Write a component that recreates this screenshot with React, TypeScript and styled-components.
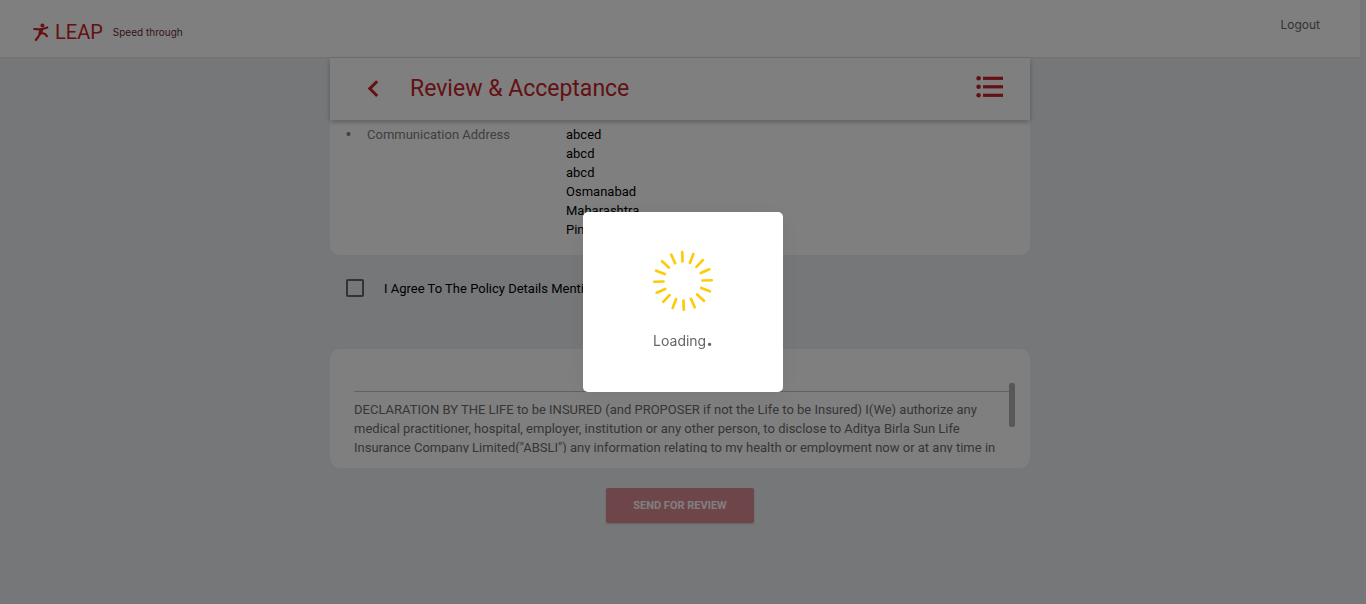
import React from "react";
import styled, { createGlobalStyle } from "styled-components";

const red = "#c7222a";

const GlobalStyle = createGlobalStyle`
  * { box-sizing: border-box; }
  body {
    margin: 0;
    background: #ebeff3;
    font-family: Roboto, "Liberation Sans", sans-serif;
    font-size: 13px;
    line-height: 19px;
    color: #000;
  }
`;

const Page = styled.div`
  min-height: 100vh;
  padding-right: 6px;
`;

const Header = styled.header`
  display: flex;
  justify-content: space-between;
  align-items: flex-start;
  height: 58px;
  padding: 15px 40px 0 33px;
  background: #fff;
  border-bottom: 1px solid #e2e2e2;
`;

const Brand = styled.div`
  display: flex;
  align-items: center;
  height: 34px;
`;

const BrandName = styled.span`
  margin: 0 10px 0 5px;
  font-size: 20px;
  color: ${red};
`;

const Tagline = styled.span`
  font-family: Inter, sans-serif;
  font-size: 10px;
  color: #6b2a30;
`;

const Logout = styled.a`
  font-family: Inter, sans-serif;
  font-size: 12px;
  color: #666;
  text-decoration: none;
`;

const Main = styled.main`
  display: flex;
  flex-direction: column;
  max-width: 700px;
  margin: 0 auto;
`;

const TitleBar = styled.div`
  display: flex;
  align-items: center;
  height: 62px;
  padding: 0 27px 0 37px;
  background: #fff;
  box-shadow: 0 2px 5px rgba(0, 0, 0, 0.26);
  z-index: 1;
`;

const Title = styled.h1`
  flex: 1;
  margin: 0 0 0 30px;
  font-size: 23px;
  line-height: 30px;
  font-weight: 400;
  color: ${red};
`;

const IconButton = styled.button`
  display: flex;
  padding: 0;
  border: 0;
  background: none;
  color: ${red};
`;

const Details = styled.ul`
  margin: 0;
  padding: 5px 16px 16px;
  list-style: none;
  background: #fff;
  border-radius: 0 0 10px 10px;
  color: #808080;
`;

const DetailRow = styled.li`
  display: grid;
  grid-template-columns: 21px 199px 1fr;

  &::before {
    content: "•";
    font-family: "Liberation Sans", sans-serif;
    font-size: 14px;
  }
`;

const Address = styled.address`
  font-style: normal;
  color: #000;
`;

const Agreement = styled.label`
  display: flex;
  align-items: flex-start;
  gap: 20px;
  margin: 24px 16px 51px;
`;

const Checkbox = styled.input`
  appearance: none;
  width: 18px;
  height: 18px;
  margin: 0;
  border: 2px solid #666;
  border-radius: 2px;
`;

const DeclarationCard = styled.section`
  display: flex;
  padding: 34px 15px 15px 24px;
  background: #fff;
  border-radius: 10px;
`;

const DeclarationText = styled.div`
  flex: 1;
  height: 70px;
  overflow: hidden;
  color: #6c6c6c;
`;

const Rule = styled.hr`
  margin: 8px 0;
  border: 0;
  border-top: 1px solid #c4c4c4;
`;

const Paragraph = styled.p`
  margin: 0;
  white-space: nowrap;
`;

const ScrollThumb = styled.div`
  width: 6px;
  height: 44px;
  border-radius: 2px;
  background: #b0b0b0;
`;

const SendButton = styled.button`
  align-self: center;
  width: 148px;
  height: 35px;
  margin-top: 20px;
  border: 0;
  border-radius: 2px;
  background: #dc8d94;
  box-shadow: 0 1px 2px rgba(0, 0, 0, 0.2);
  color: #fff;
  font-family: inherit;
  font-size: 11px;
  font-weight: 700;
`;

const Backdrop = styled.div`
  position: fixed;
  inset: 0;
  z-index: 10;
  display: flex;
  align-items: center;
  justify-content: center;
  background: rgba(0, 0, 0, 0.5);
`;

const Dialog = styled.div`
  display: flex;
  flex-direction: column;
  align-items: center;
  gap: 18px;
  width: 200px;
  height: 180px;
  padding-top: 38px;
  border-radius: 5px;
  background: #fff;
  box-shadow: 0 4px 24px rgba(0, 0, 0, 0.06);
`;

const LoadingText = styled.span`
  display: flex;
  align-items: baseline;
  font-family: Inter, sans-serif;
  font-size: 14px;
  color: #666;
`;

const Dot = styled.b`
  font-size: 20px;
  line-height: 19px;
`;

const Runner = () => (
  <svg width="17" height="18" viewBox="0 0 17 18" fill="none" stroke={red} strokeLinecap="round" strokeLinejoin="round">
    <circle cx="9.4" cy="2.4" r="2" fill={red} stroke="none" />
    <path d="M1.2 6 L5.5 6.4 L9.5 6 L14.3 4.4" strokeWidth="2.1" />
    <path d="M8.4 6.8 L7.2 10.2" strokeWidth="3.6" />
    <path d="M7 10.8 L5.2 14 L2.8 17" strokeWidth="2.1" />
    <path d="M8 10 L11.8 10.8 L14 13.2" strokeWidth="2.1" />
  </svg>
);

const Spinner = () => (
  <svg width="62" height="62" viewBox="-31 -31 62 62" stroke="#fdcb0a" strokeWidth="2.7" strokeLinecap="round">
    {Array.from({ length: 16 }, (_, i) => (
      <line key={i} x1="0" y1="-19.5" x2="0" y2="-28.8" transform={`rotate(${i * 22.5 - 1.5})`} />
    ))}
  </svg>
);

export default function App() {
  return (
    <>
      <GlobalStyle />
      <Page>
        <Header>
          <Brand>
            <Runner />
            <BrandName>LEAP</BrandName>
            <Tagline>Speed through</Tagline>
          </Brand>
          <Logout href="#">Logout</Logout>
        </Header>
        <Main>
          <TitleBar>
            <IconButton aria-label="Back">
              <svg width="13" height="18" viewBox="0 0 13 18" fill="none" stroke="currentColor" strokeWidth="3">
                <path d="M10.2 1.2 L2.8 8.6 L10.2 16" />
              </svg>
            </IconButton>
            <Title>Review &amp; Acceptance</Title>
            <IconButton aria-label="Sections">
              <svg width="27" height="26" viewBox="0 0 27 26" fill="currentColor">
                {[2.3, 10.8, 19.3].map((y) => (
                  <g key={y}>
                    <circle cx="2.6" cy={y} r="2.3" />
                    <rect x="7" y={y - 1.6} width="20" height="3.2" />
                  </g>
                ))}
              </svg>
            </IconButton>
          </TitleBar>
          <Details>
            <DetailRow>
              <span>Communication Address</span>
              <Address>
                abced<br />abcd<br />abcd<br />Osmanabad<br />Maharashtra<br />Pin
              </Address>
            </DetailRow>
          </Details>
          <Agreement>
            <Checkbox type="checkbox" />
            I Agree To The Policy Details Mentioned
          </Agreement>
          <DeclarationCard>
            <DeclarationText>
              <Rule />
              <Paragraph>
                DECLARATION BY THE LIFE to be INSURED (and PROPOSER if not the Life to be Insured) I(We) authorize any<br />
                medical practitioner, hospital, employer, institution or any other person, to disclose to Aditya Birla Sun Life<br />
                Insurance Company Limited("ABSLI") any information relating to my health or employment now or at any time in
              </Paragraph>
            </DeclarationText>
            <ScrollThumb />
          </DeclarationCard>
          <SendButton>SEND FOR REVIEW</SendButton>
        </Main>
      </Page>
      <Backdrop>
        <Dialog role="dialog" aria-label="Loading">
          <Spinner />
          <LoadingText>Loading<Dot>.</Dot></LoadingText>
        </Dialog>
      </Backdrop>
    </>
  );
}
